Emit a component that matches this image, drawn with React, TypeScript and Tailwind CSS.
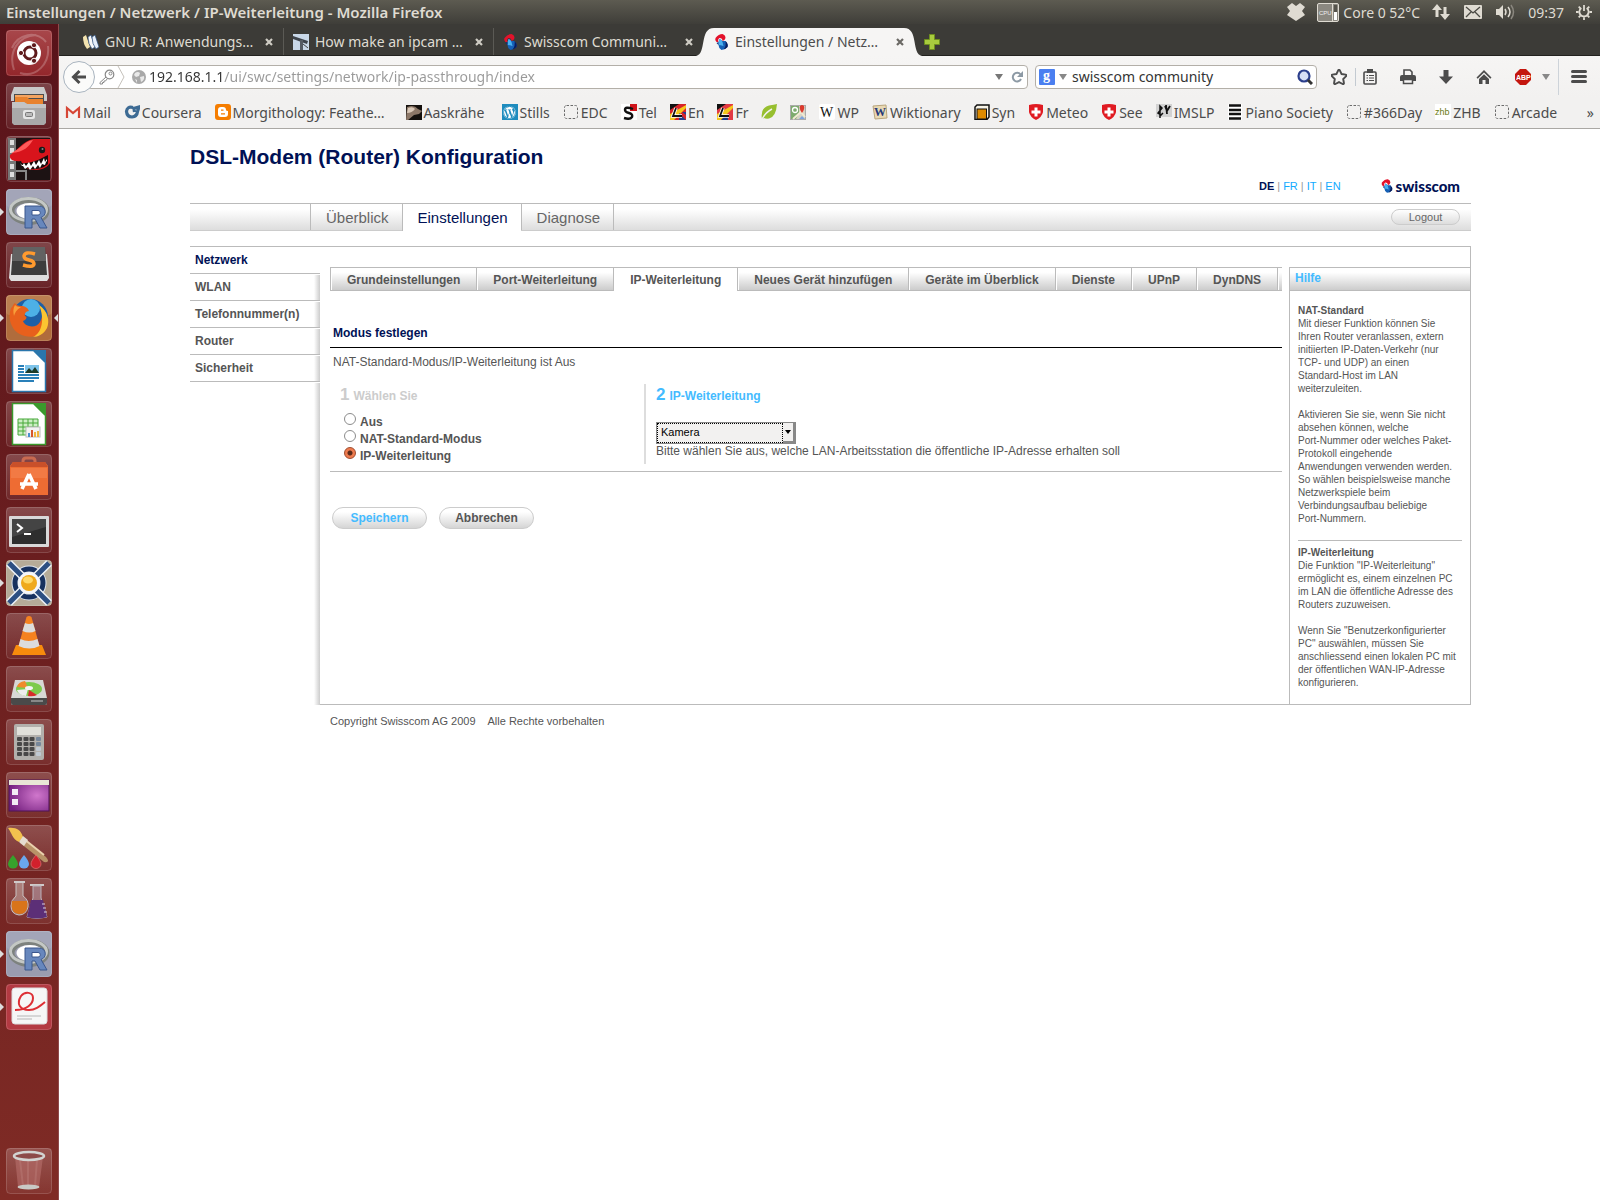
import { useState, type ReactNode } from 'react';
import clsx from 'clsx';
import { FaWordpress, FaStar } from 'react-icons/fa';

/* ---------- launcher drawings, all on a 46x46 tile ---------- */

function UbuntuIcon() {
    return (
        <>
            <path d="M8 40C2 22 12 6 30 5M14 43C30 48 44 34 42 16M6 18C12 4 30 0 40 12" fill="none" stroke="#fff" strokeOpacity=".22" strokeWidth="2" />
            <circle cx="23" cy="23" r="12" fill="#fff" />
            <circle cx="24" cy="23" r="6" fill="none" stroke="#5e1a1c" strokeWidth="3" />
            <g stroke="#fff" strokeWidth="1" fill="#5e1a1c">
                <circle cx="15" cy="23" r="2.6" />
                <circle cx="28" cy="15.2" r="2.6" />
                <circle cx="28" cy="30.8" r="2.6" />
            </g>
        </>
    );
}

function FilesIcon() {
    return (
        <>
            <path d="M8 4h30l3 8v6H5v-6z" fill="#c9c9c9" />
            <rect x="8" y="11" width="30" height="10" fill="#4c4c4c" />
            <path d="M9 12h28v3H9z" fill="#f4a460" />
            <path d="M9 14h12l2 2h14v5H9z" fill="#e8822e" />
            <path d="M6 19h12l3 2h19v19l-2 2H8l-2-2z" fill="#a9a9a9" />
            <path d="M6 19h12l3 2h19v4H6z" fill="#c4c4c4" />
            <rect x="17" y="27" width="12" height="9" rx="2" fill="#e6e6e6" />
            <rect x="19.5" y="29.5" width="7" height="4" rx="1" fill="#bbb" stroke="#777" />
        </>
    );
}

function SharkIcon() {
    return (
        <>
            <rect x="2" y="2" width="42" height="42" fill="#1c1213" />
            <rect x="2" y="2" width="8" height="42" fill="#777" />
            <path d="M4 4h4v5H4zM4 12h4v5H4zM4 20h4v5H4zM4 28h4v5H4zM4 36h4v5H4z" fill="#ddd" />
            <path d="M10 35h10v9" fill="none" stroke="#888" strokeWidth="2" />
            <path d="M4 19C12 14 16 6 27 3h17v24c-4 6-10 7-15 7-8 0-12-4-14-9C7 26 3 23 4 19z" fill="#d8141c" />
            <path d="M5 17C14 14 18 5 27 4c-4 6-8 12-22 13z" fill="#ff5a5a" />
            <path d="M13 27c10 1 18-2 29-8v9c-6 6-20 8-29-1z" fill="#190a0a" />
            <path d="M14 27l2 3 2-3 2 3 3-4 2 4 3-5 2 4 3-5 2 4 3-6 1 4 2-3v2l-1 1-1 3-3-1-2 4-2-3-3 4-2-3-3 4-2-3-3 2-2-3z" fill="#fff" />
            <circle cx="36" cy="14" r="3.2" fill="#1a1a1a" />
            <circle cx="36.5" cy="13" r="1" fill="#888" />
        </>
    );
}

function RIcon() {
    return (
        <>
            <rect x="0" y="0" width="46" height="46" rx="4" fill="#9a9caf" />
            <rect x="0" y="0" width="46" height="18" rx="4" fill="#a3a5b8" />
            <ellipse cx="23" cy="22" rx="17.5" ry="11" fill="none" stroke="#7d827e" strokeWidth="6" />
            <ellipse cx="22.5" cy="20.5" rx="18" ry="11" fill="none" stroke="#c4c8c5" strokeWidth="3" />
            <ellipse cx="24" cy="22" rx="13.5" ry="8" fill="#fff" />
            <path fillRule="evenodd" d="M19 17h14c8 0 8 10 2 11.5L41 39h-7l-5-9h-3v9h-7zM26 21.5v4.5h6c3 0 3-4.500 0-4.500z" fill="#6787bd" stroke="#3b568c" />
        </>
    );
}

function SublimeIcon() {
    return (
        <>
            <path d="M5 12h36l2 24-2 3H5l-2-3z" fill="#dedede" />
            <path d="M7 5h32l2 28H5z" fill="#3d3d3d" />
            <path d="M7 5h32l1 14H6z" fill="#626262" />
            <path d="M29 12q-10-3-11 2 0 3 5 4 5 1 5 4-1 4-11 1" fill="none" stroke="#ff9a2e" strokeWidth="3.5" />
        </>
    );
}

function FirefoxIcon() {
    return (
        <>
            <rect x="0" y="0" width="46" height="46" rx="4" fill="#b06c3c" />
            <rect x="0" y="0" width="46" height="20" rx="4" fill="#bb7f50" />
            <circle cx="24" cy="22" r="18" fill="#1d5fa6" />
            <circle cx="25" cy="13" r="9" fill="#4db0e6" />
            <path d="M5 13c1 0 3-5 4-5 1 2 3 3 6 3 4 0 7 2 8 5-3 0-5 3-4 5 3 1 1 4-2 5 2 6 13 8 17 1 3-5 3-11-1-17 8 6 11 16 8 23C36 45 12 45 6 31 3 25 3 19 5 13z" fill="#e8601c" />
            <path d="M33 10c9 6 11 16 8 23-3 6-9 9-14 9 9-4 12-18 6-32z" fill="#fbc531" />
            <path d="M9 10c2 2 4 2 6 2-5 3-6 6-7 9-1-4-1-8 1-11z" fill="#f89e3a" />
        </>
    );
}

function DocBase({ stroke, children }: { stroke: string; children: ReactNode }) {
    return (
        <>
            <path d="M6.5 2.5h21l12 12v29h-33z" fill="#fff" stroke={stroke} strokeWidth="1.5" />
            <path d="M27 2h13v13z" fill={stroke} />
            {children}
        </>
    );
}

function WriterIcon() {
    return (
        <DocBase stroke="#2a76ac">
            <path d="M12 18h6M12 21h6M12 24h6M12 27h21M12 30h21M12 33h16" stroke="#2a80b9" strokeWidth="1.8" />
            <rect x="19" y="17" width="14" height="8" fill="#7ec4ea" />
            <path d="M19 25l4-5 3 3 3-4 4 6z" fill="#1d3b2a" />
        </DocBase>
    );
}

function CalcIcon() {
    return (
        <DocBase stroke="#3a9a2c">
            <path d="M12 18h20v16H12zM12 22h20M12 26h20M12 30h20M17 18v16M22 18v16M27 18v16" fill="#cdeec4" stroke="#46a838" />
            <rect x="20" y="26" width="14" height="10" fill="#f3f3f3" stroke="#bbb" />
            <path d="M22 36v-4h2v4z" fill="#4a8fd0" />
            <path d="M25 36v-7h2v7z" fill="#d6572c" />
            <path d="M28 36v-5h2v5zM31 36v-6h2v6z" fill="#f0b43c" />
        </DocBase>
    );
}

function SoftwareIcon() {
    return (
        <>
            <path d="M17 12V7q0-3 3-3h6q3 0 3 3v5" fill="none" stroke="#c96a50" strokeWidth="3" />
            <path d="M4 12l3-4h32l3 4v29H4z" fill="#ee6c33" />
            <path d="M4 13l3-5h32l3 5z" fill="#c9502a" />
            <path d="M5 14h36v10H5z" fill="#f27a44" />
            <path d="M23 20l-7 15M23 20l7 15M14 30h18" stroke="#fff" strokeWidth="3.6" fill="none" />
        </>
    );
}

function TerminalIcon() {
    return (
        <>
            <rect x="3" y="9" width="40" height="31" rx="1" fill="#d9d9d9" />
            <rect x="6" y="12" width="34" height="25" fill="#2e2e2e" />
            <path d="M6 12h34v8L6 30z" fill="#444" />
            <path d="M11 17l5 4-5 4M18 27h7" fill="none" stroke="#fff" strokeWidth="2" />
        </>
    );
}

function BoincIcon() {
    return (
        <>
            <rect x="0" y="0" width="46" height="46" rx="4" fill="#b5ab98" />
            <circle cx="23" cy="23" r="14" fill="none" stroke="#dfe6ef" strokeWidth="7" />
            <circle cx="23" cy="23" r="14" fill="none" stroke="#17315f" strokeWidth="5" />
            <path d="M3 3l40 40M43 3L3 43" stroke="#eef2f7" strokeWidth="8" />
            <path d="M3 3l40 40M43 3L3 43" stroke="#2d4f82" strokeWidth="5" />
            <circle cx="23" cy="23" r="11" fill="#f4f6fa" />
            <circle cx="23" cy="23" r="8" fill="#efa91c" />
            <ellipse cx="22" cy="20" rx="5" ry="3.5" fill="#ffd968" />
        </>
    );
}

function VlcIcon() {
    return (
        <>
            <path d="M10 32h26l4 10H6z" fill="#f78b0c" />
            <path d="M20.5 4q2.5-2 5 0l8 29q-10 5-21 0z" fill="#f58220" />
            <path d="M19 10q4 2 8 0l2.5 8q-6 3-13 0zM14.5 26q8 4 17 0l2 7q-10 5-21 0z" fill="#dcdcdc" />
        </>
    );
}

function DiskIcon() {
    return (
        <>
            <path d="M9 14h28l4 18v5q0 2-2 2H7q-2 0-2-2v-5z" fill="#d8d8d6" />
            <path d="M5 32h36v5q0 2-2 2H7q-2 0-2-2z" fill="#4a4a4a" />
            <ellipse cx="23" cy="23" rx="13" ry="7" fill="#7ccb4c" />
            <path d="M22 22l-11-1q1-5 8-6z" fill="#f08a2c" />
            <path d="M23 24l8 5q-4 2-9 1z" fill="#d62c2c" />
            <path d="M22 23l-2 7q-8-1-9-6z" fill="#eee" />
            <ellipse cx="23" cy="22" rx="4" ry="2" fill="#f5f5f5" />
            <path d="M25 34h12v2H25z" fill="#888" />
        </>
    );
}

function CalculatorIcon() {
    const keys = [17, 22, 27, 32];
    return (
        <>
            <rect x="8" y="5" width="30" height="36" rx="2" fill="#b2b0ac" />
            <rect x="11" y="8" width="24" height="8" fill="#e0e0da" />
            {keys.map((y) => (
                <g key={y} fill="#484848">
                    <rect x="11" y={y + 1} width="5" height="4" rx="1" />
                    <rect x="17.5" y={y + 1} width="5" height="4" rx="1" />
                    <rect x="23.5" y={y + 1} width="5" height="4" rx="1" />
                    <rect x="30" y={y + 1} width="5" height="4" rx="1" fill={y > 25 ? '#bfc9d2' : '#76879a'} />
                </g>
            ))}
        </>
    );
}

function WorkspaceIcon() {
    return (
        <>
            <radialGradient id="wallpaper" cx=".7" cy=".5" r=".75">
                <stop offset="0" stopColor="#d077cc" />
                <stop offset="1" stopColor="#74207f" />
            </radialGradient>
            <rect x="3" y="8" width="40" height="31" fill="url(#wallpaper)" stroke="#4d1256" />
            <rect x="3" y="8" width="40" height="5" fill="#e9e6d6" />
            <path d="M6 17h6v6H6zM6 27h6v6H6z" fill="#f3ecf4" />
        </>
    );
}

function BrushIcon() {
    return (
        <>
            <path d="M16 13l24 19q5 6-2 5L14 18z" fill="#b89368" />
            <path d="M18 14l20 16" stroke="#ead2ae" strokeWidth="2" />
            <path d="M2 3c8-1 13 2 15 9l-4 5C6 14 6 8 2 3z" fill="#f2c14e" />
            <path d="M13 17l4-6 5 4-4 6z" fill="#e5ddd0" />
            <path d="M7 30q5 6 5 9a5 4.500 0 0 1-10 0q0-3 5-9z" fill="#37a22c" />
            <path d="M18 30q5 6 5 9a5 4.500 0 0 1-10 0q0-3 5-9z" fill="#6aa7ee" />
            <path d="M30 30q5 6 5 9a5 4.500 0 0 1-10 0q0-3 5-9z" fill="#d2202c" stroke="#e98080" strokeWidth=".6" />
        </>
    );
}

function FlasksIcon() {
    return (
        <>
            <path d="M10 4h7v14q6 4 5 11-2 8-9 8-8-1-8-9 0-6 5-10z" fill="#c9b3ae" fillOpacity=".5" stroke="#c8c2c2" />
            <path d="M6 23h15q2 13-8 13-9-1-7-13z" fill="#d9741a" />
            <path d="M8 4h11M24 7h14" stroke="#cfcaca" strokeWidth="2" />
            <path d="M27 8h8v12l6 19q-10 3-20 0l6-19z" fill="#b9a6b4" fillOpacity=".5" stroke="#bbb2ba" />
            <path d="M25 22h12l4 17q-10 3-20 0z" fill="#5c2f77" />
            <path d="M36 26h3M37 30h3M38 34h3" stroke="#d9d0dd" />
        </>
    );
}

function EvinceIcon() {
    return (
        <>
            <rect x="0" y="0" width="46" height="46" rx="4" fill="#b33a42" />
            <rect x="6" y="4" width="35" height="36" rx="3" fill="#f6f6f6" stroke="#ddd" />
            <path d="M9 26c12 0 18-6 18-12 0-6-8-7-12-2-5 8-1 14 8 14 6 0 10-3 16-8" fill="none" stroke="#dd2f35" strokeWidth="2" />
            <path d="M11 32h24M11 35h15" stroke="#ccc" strokeWidth="1.5" />
        </>
    );
}

function TrashIcon() {
    return (
        <>
            <path d="M9 9h28l-4 30q-10 4-21 0z" fill="#b8706c" fillOpacity=".6" />
            <path d="M14 12l3 26M22 12v28M31 12l-2 26" stroke="#d9a5a2" strokeOpacity=".2" strokeWidth="2" />
            <ellipse cx="23" cy="8" rx="15" ry="4" fill="#8c4b49" stroke="#d2d4d2" strokeWidth="2.5" />
            <ellipse cx="22.5" cy="39" rx="11" ry="2.5" fill="#c9c9c5" />
        </>
    );
}

const launcherItems: { label: string; icon: ReactNode; running?: boolean; focused?: boolean }[] = [
    { label: 'Dash', icon: <UbuntuIcon /> },
    { label: 'Dateien', icon: <FilesIcon /> },
    { label: 'Lightworks', icon: <SharkIcon /> },
    { label: 'R', icon: <RIcon />, running: true },
    { label: 'Sublime Text', icon: <SublimeIcon /> },
    { label: 'Firefox', icon: <FirefoxIcon />, running: true, focused: true },
    { label: 'Writer', icon: <WriterIcon /> },
    { label: 'Calc', icon: <CalcIcon /> },
    { label: 'Software-Center', icon: <SoftwareIcon /> },
    { label: 'Terminal', icon: <TerminalIcon /> },
    { label: 'BOINC', icon: <BoincIcon />, running: true },
    { label: 'VLC', icon: <VlcIcon /> },
    { label: 'Laufwerke', icon: <DiskIcon /> },
    { label: 'Taschenrechner', icon: <CalculatorIcon /> },
    { label: 'Arbeitsfläche', icon: <WorkspaceIcon /> },
    { label: 'Farben', icon: <BrushIcon /> },
    { label: 'Labor', icon: <FlasksIcon /> },
    { label: 'R-Konsole', icon: <RIcon />, running: true },
    { label: 'Dokumentenbetrachter', icon: <EvinceIcon />, running: true },
];

function LauncherButton({
    label,
    icon,
    running,
    focused,
}: {
    label: string;
    icon: ReactNode;
    running?: boolean;
    focused?: boolean;
}) {
    return (
        <button aria-label={label} className="relative flex h-[46px] w-full justify-center pr-px">
            <span
                className={clsx(
                    'block size-[46px] overflow-hidden rounded bg-linear-to-b',
                    label === 'Dash' ? 'from-[#a8474b] to-[#93262b]' : 'from-white/20 to-white/5',
                )}
            >
                <svg viewBox="0 0 46 46" className="size-[46px]">
                    {icon}
                    <rect x=".5" y=".5" width="45" height="45" rx="4" fill="none" stroke="#fff" strokeOpacity=".15" />
                </svg>
            </span>
            {running && (
                <svg viewBox="0 0 4 8" className="absolute top-[19px] left-0 h-2 w-1">
                    <path d="M0 0l4 4-4 4z" fill="#ddd" />
                </svg>
            )}
            {focused && (
                <svg viewBox="0 0 4 8" className="absolute top-[19px] right-0 h-2 w-1">
                    <path d="M4 0L0 4l4 4z" fill="#ddd" />
                </svg>
            )}
        </button>
    );
}

function Launcher() {
    return (
        <nav
            aria-label="Starter"
            className="flex w-[59px] shrink-0 flex-col justify-between border-r border-[#8f4a4b] bg-linear-to-b from-[#59131a] to-[#7f2b25] py-[6px]"
        >
            <div className="flex flex-col gap-[7px]">
                {launcherItems.map((item) => (
                    <LauncherButton key={item.label} {...item} />
                ))}
            </div>
            <LauncherButton label="Papierkorb" icon={<TrashIcon />} />
        </nav>
    );
}

/* ---------- system panel ---------- */

function TopPanel() {
    return (
        <header className="flex h-6 items-center justify-between bg-linear-to-b from-[#5d5b51] to-[#3f3e39] pr-2 pl-[6px] text-[14px] text-[#dfdbd2]">
            <span className="text-[15px] font-semibold">Einstellungen / Netzwerk / IP-Weiterleitung - Mozilla Firefox</span>
            <div className="flex items-center">
                <svg viewBox="0 0 18 18" className="size-[18px]" fill="#dfdbd2">
                    <path d="M5 0l4 3 4-3 5 4-3 4 3 4-3 2-6 4-6-4-3-2 3-4-3-4z" />
                </svg>
                <svg viewBox="0 0 22 19" className="ml-3 h-[19px] w-[22px]">
                    <rect x=".5" y=".5" width="21" height="18" rx="1.5" fill="#8b8880" stroke="#dfdbd2" />
                    <path d="M15.5 0v19" stroke="#dfdbd2" />
                    <rect x="17" y="2" width="3" height="7" fill="#55534b" />
                    <rect x="17" y="9" width="3" height="8" fill="#fff" />
                    <text x="2" y="12" fontSize="6" fill="#eee" fontFamily="Liberation Sans, sans-serif">CPU</text>
                </svg>
                <span className="ml-1">Core 0 52°C</span>
                <svg viewBox="0 0 18 18" className="ml-3 size-[18px]" fill="#dfdbd2">
                    <path d="M5 1l5 6H6.5v7h-3V7H0zM13 17l-5-6h3.5V4h3v7H18z" />
                </svg>
                <svg viewBox="0 0 18 14" className="ml-[14px] h-[14px] w-[18px]">
                    <rect width="18" height="14" rx="1" fill="#dfdbd2" />
                    <path d="M2 2l7 6 7-6M2 12l5-5M16 12l-5-5" fill="none" stroke="#4a4943" strokeWidth="1.3" />
                </svg>
                <svg viewBox="0 0 20 16" className="ml-[14px] h-4 w-5">
                    <path d="M0 5h3l4-4v14l-4-4H0z" fill="#dfdbd2" />
                    <path d="M9 5q2 3 0 6M12 3q4 5 0 10" fill="none" stroke="#dfdbd2" strokeWidth="1.5" />
                    <path d="M15 1q5 7 0 14" fill="none" stroke="#8a877f" strokeWidth="1.5" />
                </svg>
                <span className="ml-3">09:37</span>
                <svg viewBox="0 0 18 18" className="ml-3 size-4" fill="none" stroke="#dfdbd2">
                    <path d="M6 4.5a5.200 5.200 0 1 0 6 0" strokeWidth="2" />
                    <path d="M9 1v7" strokeWidth="2" />
                    <path d="M3 3l2 2M15 3l-2 2M0 9h3M15 9h3M3 15l2-2M15 15l-2-2M9 15v3" strokeWidth="2" />
                </svg>
            </div>
        </header>
    );
}

/* ---------- browser chrome ---------- */

function SwisscomMark({ className }: { className: string }) {
    return (
        <svg viewBox="0 0 14 16" className={className}>
            <path d="M1 4Q4 0 8 0q3 1 3 4l-1 2-2 1q0-3-3-3-2 1-1 4L2 8Q0 6 1 4z" fill="#e3122b" />
            <path d="M5 5l3 2 3 0q3 3 2 6-3 3-6 3-3-2-3-5 0-3 1-6z" fill="#1560b5" />
            <path d="M5 5q2 0 3 3l1 4q-3-1-5-1 0-4 1-6z" fill="#4ab0ee" />
            <path d="M11 7q3 3 2 6-2 2-4 2.500Q12 12 11 7z" fill="#0a1c5c" />
            <path d="M2 9l2-1v3z" fill="#0c2e7e" />
        </svg>
    );
}

function BooksIcon() {
    return (
        <svg viewBox="0 0 16 16" className="size-4 shrink-0">
            <path d="M0 3l3-2 4 12-3 2Q0 10 0 3z" fill="#f3e3b0" />
            <path d="M5 3l3-2 4 12-3 2Q5 10 5 3z" fill="#f8f8f8" stroke="#2b4f7c" strokeWidth=".7" />
            <path d="M9 3l3-2 4 12-3 2Q9 10 9 3z" fill="#e5eefa" stroke="#2b4f7c" strokeWidth=".7" />
        </svg>
    );
}

function CameraIcon() {
    return (
        <svg viewBox="0 0 16 16" className="size-4 shrink-0">
            <rect width="16" height="16" fill="#c9d8e8" />
            <path d="M0 2l15 5-1 3L0 5z" fill="#3e444c" />
            <path d="M7 6h3v10H7z" fill="#565c64" />
            <path d="M10 10l5 4" stroke="#444" />
        </svg>
    );
}

function CloseIcon({ active }: { active?: boolean }) {
    return (
        <svg viewBox="0 0 8 8" className="size-2">
            <path d="M1 1l6 6M7 1L1 7" stroke={active ? '#6b6965' : '#cfccc4'} strokeWidth="2.2" />
        </svg>
    );
}

function BackgroundTab({ title, icon, divider }: { title: string; icon: ReactNode; divider?: boolean }) {
    return (
        <div
            className={clsx(
                'flex h-[27px] w-[210px] items-center gap-[6px] border-r pr-[10px] pl-[9px] text-[#dfdbd2]',
                divider ? 'border-[#5b5a55]' : 'border-transparent',
            )}
        >
            {icon}
            <button className="flex-1 text-left whitespace-nowrap">{title}</button>
            <button aria-label={`${title} schließen`}>
                <CloseIcon />
            </button>
        </div>
    );
}

function TabStrip() {
    return (
        <div className="flex h-8 items-end border-b border-[#23221f] bg-[#3c3b37] pl-[15px] text-[14px]">
            <BackgroundTab title="GNU R: Anwendungs…" icon={<BooksIcon />} divider />
            <BackgroundTab title="How make an ipcam …" icon={<CameraIcon />} divider />
            <BackgroundTab title="Swisscom Communi…" icon={<SwisscomMark className="h-4 w-[15px] shrink-0" />} />
            <div className="-mb-px -ml-2 flex h-7 items-stretch">
                <svg viewBox="0 0 18 28" className="h-7 w-[18px]">
                    <path d="M0 28C11 26 3 0 18 0v28z" fill="#f6f5f4" />
                </svg>
                <div className="flex w-[190px] items-center gap-[6px] bg-[#f6f5f4] pb-px text-[#4c4c4c]">
                    <SwisscomMark className="h-4 w-[15px] shrink-0" />
                    <button className="flex-1 text-left whitespace-nowrap">Einstellungen / Netz…</button>
                    <button aria-label="Tab schließen">
                        <CloseIcon active />
                    </button>
                </div>
                <svg viewBox="0 0 18 28" className="h-7 w-[18px]">
                    <path d="M18 28C7 26 15 0 0 0v28z" fill="#f6f5f4" />
                </svg>
            </div>
            <button aria-label="Neuer Tab" className="mb-[5px] ml-[2px]">
                <svg viewBox="0 0 16 16" className="size-4">
                    <path d="M5.5.5h5v5h5v5h-5v5h-5v-5h-5v-5h5z" fill="#a8cc3e" stroke="#6f8f1e" />
                </svg>
            </button>
        </div>
    );
}

function NavBar() {
    const [url, setUrl] = useState('192.168.1.1/ui/swc/settings/network/ip-passthrough/index');
    const [search, setSearch] = useState('swisscom community');

    return (
        <div className="flex h-[42px] items-center bg-linear-to-b from-[#f6f5f4] to-[#f2f1f0] pr-[13px] pb-px pl-1 text-[14px] text-[#4c4c4c]">
            <button
                aria-label="Zurück"
                className="z-10 flex size-8 shrink-0 items-center justify-center rounded-full border border-[#a9b4bf] bg-[#fbfbfa]"
            >
                <svg viewBox="0 0 16 16" className="size-4">
                    <path d="M15 8H3M8.5 2L2.5 8l6 6" fill="none" stroke="#4c4c4c" strokeWidth="3" />
                </svg>
            </button>
            <div className="-ml-2 flex h-6 flex-1 items-center rounded-sm border border-[#b3afa8] bg-white pr-1 pl-[11px]">
                <svg viewBox="0 0 16 16" className="size-4">
                    <circle cx="10.5" cy="5.5" r="4.3" fill="none" stroke="#888" strokeWidth="1.2" />
                    <circle cx="11.5" cy="4.5" r="1.5" fill="none" stroke="#888" />
                    <path d="M7 8l-6 5.500V15h2.500v-1.500H5V12h1.500L8.500 9.500" fill="none" stroke="#888" />
                </svg>
                <svg viewBox="0 0 8 22" className="ml-[2px] h-[22px] w-2">
                    <path d="M1 0l6 11-6 11" fill="none" stroke="#c5c1bb" />
                </svg>
                <svg viewBox="0 0 14 14" className="ml-[7px] size-[14px]">
                    <circle cx="7" cy="7" r="7" fill="#a9a9a9" />
                    <path d="M3 3q3-2 5 0l-1 3-3 1-2-2zM8 7l4-1q1 4-3 6zM3 9l2 1v3z" fill="#e9e9e9" />
                </svg>
                {/* the host part is darker than the path behind it */}
                <input
                    aria-label="Adresse"
                    value={url}
                    onChange={(e) => setUrl(e.target.value)}
                    className="ml-[3px] min-w-0 flex-1 bg-linear-to-r from-[#333] from-[75px] to-[#999] to-[75px] bg-clip-text text-transparent caret-black outline-none"
                />
                <svg viewBox="0 0 8 6" className="h-[6px] w-2">
                    <path d="M0 0h8L4 6z" fill="#777" />
                </svg>
                <button aria-label="Neu laden" className="ml-2">
                    <svg viewBox="0 0 12 12" className="size-3">
                        <path d="M9.5 3.500A4.300 4.300 0 1 0 10 8" fill="none" stroke="#8d9aa5" strokeWidth="2" />
                        <path d="M12 0v6H6z" fill="#8d9aa5" />
                    </svg>
                </button>
            </div>
            <div className="ml-[7px] flex h-6 w-[282px] items-center rounded-sm border border-[#b3afa8] bg-white px-[3px]">
                <svg viewBox="0 0 16 16" className="size-4">
                    <rect width="16" height="16" rx="1" fill="#4a7ff0" />
                    <text x="4" y="11" fontSize="14" fontWeight="700" fill="#fff" fontFamily="Liberation Serif, serif">g</text>
                </svg>
                <svg viewBox="0 0 8 6" className="ml-1 h-[6px] w-2">
                    <path d="M0 0h8L4 6z" fill="#888" />
                </svg>
                <input
                    aria-label="Suche"
                    value={search}
                    onChange={(e) => setSearch(e.target.value)}
                    className="ml-[5px] min-w-0 flex-1 text-[#333] outline-none"
                />
                <button aria-label="Suchen">
                    <svg viewBox="0 0 16 16" className="size-4">
                        <circle cx="7" cy="7" r="5.5" fill="#d7dff5" stroke="#2c3f8c" strokeWidth="2.2" />
                        <path d="M11 11l4 4" stroke="#333" strokeWidth="3" />
                    </svg>
                </button>
            </div>
            <div className="flex items-center text-[#4c4c4c]">
                <button aria-label="Lesezeichen" className="ml-[14px]">
                    <FaStar size={16} fill="#f6f5f4" stroke="#4c4c4c" strokeWidth={70} />
                </button>
                <span className="ml-2 h-[18px] w-px bg-[#c3cad1]" />
                <svg viewBox="0 0 16 16" className="ml-[6px] size-4">
                    <rect x="2" y="3" width="12" height="12" rx="1" fill="none" stroke="#4c4c4c" strokeWidth="1.6" />
                    <rect x="5" y="0" width="6" height="4" fill="#4c4c4c" />
                    <path d="M4.5 6.500h1.500M7 6.500h5M4.500 9h1.500M7 9h5M4.500 11.500h1.500M7 11.500h5" stroke="#4c4c4c" strokeWidth="1.2" />
                </svg>
                <svg viewBox="0 0 16 16" className="ml-[22px] size-4">
                    <path d="M4 6V1h6l2 2v3" fill="none" stroke="#4c4c4c" strokeWidth="1.6" />
                    <path d="M0 8q0-2 2-2h12q2 0 2 2v4h-3v-2H3v2H0z" fill="#4c4c4c" />
                    <path d="M3.5 10.500h9v4h-9z" fill="#f6f5f4" stroke="#4c4c4c" strokeWidth="1.5" />
                </svg>
                <svg viewBox="0 0 16 16" className="ml-[22px] size-4" fill="#4c4c4c">
                    <path d="M5.5 1h5v6.500H15L8 15 1 7.500h4.500z" />
                </svg>
                <svg viewBox="0 0 16 16" className="ml-[22px] size-4" fill="#4c4c4c">
                    <path d="M8 1l7.500 7.500-1.200 1.200L8 3.500 1.700 9.700.5 8.500z" />
                    <path d="M3 10l5-4.800 5 4.800v5H9.500v-4h-3v4H3z" />
                </svg>
                <svg viewBox="0 0 16 16" className="ml-[23px] size-4">
                    <path d="M5 0h6l5 5v6l-5 5H5l-5-5V5z" fill="#c4160e" />
                    <text x="1" y="10.5" fontSize="7" fontWeight="700" fill="#fff" fontFamily="Liberation Sans, sans-serif">ABP</text>
                </svg>
                <svg viewBox="0 0 8 6" className="ml-[11px] h-[6px] w-2">
                    <path d="M0 0h8L4 6z" fill="#888" />
                </svg>
                <span className="ml-2 h-9 w-px bg-[#cdd3d9]" />
                <button aria-label="Menü" className="ml-3 flex w-4 flex-col gap-[2px]">
                    <span className="h-[3px] rounded-sm bg-[#4c4c4c]" />
                    <span className="h-[3px] rounded-sm bg-[#4c4c4c]" />
                    <span className="h-[3px] rounded-sm bg-[#4c4c4c]" />
                </button>
            </div>
        </div>
    );
}

const dashedPage = <rect x="1.5" y="1.5" width="13" height="13" rx="2" fill="none" stroke="#6b6b6b" strokeDasharray="2.5 1.5" />;

const swissShield = (
    <>
        <path d="M1 1q7-2 14 0v7q-1 5-7 8-6-3-7-8z" fill="#e01b22" />
        <path d="M6.5 3.500h3v3h3v3h-3v3h-3v-3h-3v-3h3z" fill="#fff" />
    </>
);

const bookmarks: { label: string; icon: ReactNode; width?: string }[] = [
    {
        label: 'Mail',
        icon: (
            <>
                <path d="M1 3h14v11H1z" fill="#f3f3f3" />
                <path d="M2 14V4l6 5 6-5v10" fill="none" stroke="#d64636" strokeWidth="2.2" />
            </>
        ),
    },
    {
        label: 'Coursera',
        icon: <path d="M9 3.500Q3 2 2.500 7.500 3 13 8 13q5-.5 5.500-5.500L15 3l-5 1.500.5 3.500" fill="none" stroke="#3d6b94" strokeWidth="3.2" />,
    },
    {
        label: 'Morgithology: Feathe…',
        width: 'min-w-[178px]',
        icon: (
            <>
                <rect width="16" height="16" rx="3" fill="#f57d00" />
                <path fillRule="evenodd" d="M3 6q0-3 3-3h2q3 0 3 3 0 1 2 1v3q0 3-3 3H6q-3 0-3-3zM6 5.500v1.300h2.500V5.500zM6 9.200v1.300h4V9.200z" fill="#fff" />
            </>
        ),
    },
    {
        label: 'Aaskrähe',
        width: 'min-w-[83px]',
        icon: (
            <>
                <rect y="1" width="16" height="15" fill="#15110e" />
                <path d="M1 3q7-3 11 2l4 2-3 3-5 1-6 5H0z" fill="#8d7868" />
                <path d="M2 4q5-2 7 1-3 4-8 4z" fill="#d9c8b8" />
            </>
        ),
    },
    { label: 'Stills', icon: 'wordpress' },
    { label: 'EDC', icon: dashedPage },
    {
        label: 'Tel',
        icon: (
            <>
                <rect width="16" height="16" fill="#fff" />
                <rect x="9" width="7" height="7" fill="#d0141b" />
                <path d="M12 5Q4 2 4 6q0 2 4 3 4 1 3 4-2 3-8 1" fill="none" stroke="#111" strokeWidth="2.4" />
            </>
        ),
    },
    {
        label: 'En',
        icon: (
            <>
                <rect width="16" height="16" fill="#d8232a" />
                <path d="M0 0h9L0 6z" fill="#111" />
                <path d="M0 16V10L16 1v3L4 16z" fill="#f5c71a" />
                <path d="M9 9l7 7h-7zM12 8h4v3z" fill="#22408f" />
                <path d="M6 4L3 12h9" fill="none" stroke="#fff" strokeWidth="3.5" />
                <path d="M6 4L3 12h9" fill="none" stroke="#111" strokeWidth="1.8" />
            </>
        ),
    },
    {
        label: 'Fr',
        icon: (
            <>
                <rect width="16" height="16" fill="#e23a44" />
                <path d="M0 0h9L0 6z" fill="#111" />
                <path d="M0 16V10L16 1v3L4 16z" fill="#f5c71a" />
                <path d="M8 12h3v4H4z" fill="#22408f" />
                <path d="M6 4L3 12h9" fill="none" stroke="#fff" strokeWidth="3.5" />
                <path d="M6 4L3 12h9" fill="none" stroke="#111" strokeWidth="1.8" />
            </>
        ),
    },
    {
        label: '',
        icon: (
            <>
                <path d="M1 15Q-1 4 8 1.500q5-1 8-1.500-1 13-8 14.500-3 .5-5-.5z" fill="#97bf2f" />
                <path d="M1 15Q5 8 11 5" fill="none" stroke="#f2f1f0" strokeWidth="1.5" />
            </>
        ),
    },
    {
        label: '',
        icon: (
            <>
                <rect x=".5" y="1.5" width="15" height="14" fill="#d8d4c6" stroke="#aaa" />
                <path d="M1 2h8v7l-3 6H1z" fill="#7dab6e" />
                <circle cx="5" cy="6" r="2.5" fill="none" stroke="#fff" strokeWidth="1.3" />
                <path d="M3 15L11 8l4 5" fill="none" stroke="#f0ead2" strokeWidth="2" />
                <path d="M9 15l3-3 3 3z" fill="#7da3dd" />
                <path d="M12 9Q9 5 10 2q2-2 4 0 1 3-2 7z" fill="#db3a2d" />
            </>
        ),
    },
    {
        label: 'WP',
        icon: (
            <>
                <rect width="16" height="16" rx="2" fill="#fff" />
                <text x="1" y="13" fontSize="14" fill="#111" fontFamily="Liberation Serif, serif">W</text>
            </>
        ),
    },
    {
        label: 'Wiktionary',
        icon: (
            <>
                <path d="M1 2l13-1 1 13-12 1z" fill="#e9d9b4" stroke="#b9a57c" />
                <text x="2" y="12" fontSize="12" fontWeight="700" fill="#263a78" fontFamily="Liberation Serif, serif">W</text>
            </>
        ),
    },
    {
        label: 'Syn',
        icon: (
            <>
                <path d="M3 1h12v12l-2 2.500H1V3z" fill="#f7f3e6" stroke="#111" strokeWidth="1.5" />
                <rect x="3" y="5" width="9.5" height="10" fill="#dd8a00" stroke="#111" />
            </>
        ),
    },
    { label: 'Meteo', icon: swissShield },
    { label: 'See', icon: swissShield },
    {
        label: 'IMSLP',
        icon: (
            <>
                <rect width="16" height="13" fill="#d2d2d2" />
                <path d="M4 14V2l2 2-4 5 3 2 2-2" fill="none" stroke="#111" strokeWidth="1.5" />
                <path d="M9 2l2 5 3-5M10 1l1 9" fill="none" stroke="#111" strokeWidth="1.8" />
            </>
        ),
    },
    {
        label: 'Piano Society',
        icon: (
            <>
                <rect width="14" height="16" fill="#fff" />
                <path d="M1 1.500h12M1 6h12M1 10h12M1 14.500h12" stroke="#111" strokeWidth="2.4" />
            </>
        ),
    },
    { label: '#366Day', icon: dashedPage },
    {
        label: 'ZHB',
        icon: (
            <>
                <rect width="16" height="16" fill="#fff" />
                <text x="0" y="11" fontSize="9" fill="#6b7a10" fontFamily="Liberation Sans, sans-serif">zhb</text>
            </>
        ),
    },
    { label: 'Arcade', icon: dashedPage },
];

function BookmarksBar() {
    return (
        <div className="flex h-[31px] items-center justify-between border-b border-[#aaa8a4] bg-[#f2f1f0] pr-[6px] pb-[2px] pl-[6px] text-[14px] text-[#4c4c4c]">
            <div className="flex items-center gap-[13px]">
                {bookmarks.map(({ label, icon, width }, index) => (
                    <a
                        key={index}
                        href="#"
                        aria-label={label || 'Lesezeichen'}
                        className={clsx('flex items-center gap-[2px] whitespace-nowrap', width)}
                    >
                        {icon === 'wordpress' ? (
                            <span className="flex size-4 items-center justify-center bg-[#1e8cbe] text-white">
                                <FaWordpress size={13} />
                            </span>
                        ) : (
                            <svg viewBox="0 0 16 16" className="size-4 shrink-0">
                                {icon}
                            </svg>
                        )}
                        {label}
                    </a>
                ))}
            </div>
            <button>»</button>
        </div>
    );
}

/* ---------- router page ---------- */

const mainTabs = ['Überblick', 'Einstellungen', 'Diagnose'];
const sideItems = ['Netzwerk', 'WLAN', 'Telefonnummer(n)', 'Router', 'Sicherheit'];
const subTabs = [
    'Grundeinstellungen',
    'Port-Weiterleitung',
    'IP-Weiterleitung',
    'Neues Gerät hinzufügen',
    'Geräte im Überblick',
    'Dienste',
    'UPnP',
    'DynDNS',
];
const modes = ['Aus', 'NAT-Standard-Modus', 'IP-Weiterleitung'];

const natHelp = `Mit dieser Funktion können Sie
Ihren Router veranlassen, extern
initiierten IP-Daten-Verkehr (nur
TCP- und UDP) an einen
Standard-Host im LAN
weiterzuleiten.

Aktivieren Sie sie, wenn Sie nicht
absehen können, welche
Port-Nummer oder welches Paket-
Protokoll eingehende
Anwendungen verwenden werden.
So wählen beispielsweise manche
Netzwerkspiele beim
Verbindungsaufbau beliebige
Port-Nummern.`;

const ipHelp = `Die Funktion "IP-Weiterleitung"
ermöglicht es, einem einzelnen PC
im LAN die öffentliche Adresse des
Routers zuzuweisen.

Wenn Sie "Benutzerkonfigurierter
PC" auswählen, müssen Sie
anschliessend einen lokalen PC mit
der öffentlichen WAN-IP-Adresse
konfigurieren.`;

function PageHeader() {
    return (
        <>
            <h1 className="text-[21px] leading-6 font-bold text-[#001155]">DSL-Modem (Router) Konfiguration</h1>
            <div className="mt-[6px] flex h-7 items-center justify-end pr-[11px] pb-[6px]">
                <div className="flex gap-[3px] text-[11px] text-[#11aaff]">
                    <a href="#" className="font-bold text-[#001155]">DE</a>
                    <span className="text-[#999]">|</span>
                    <a href="#">FR</a>
                    <span className="text-[#999]">|</span>
                    <a href="#">IT</a>
                    <span className="text-[#999]">|</span>
                    <a href="#">EN</a>
                </div>
                <div className="ml-10 flex items-center gap-[3px]">
                    <SwisscomMark className="h-[14px] w-3" />
                    <span className="text-[15px] leading-4 font-black text-[#001155] [font-family:Lato,'Open_Sans',sans-serif]">swisscom</span>
                </div>
            </div>
            <nav className="flex h-7 items-stretch border-y border-t-[#bbb] border-b-[#ccc] bg-linear-to-b from-white from-20% to-[#ddd]">
                <div className="w-[120px]" />
                {mainTabs.map((tab) => (
                    <a
                        key={tab}
                        href="#"
                        className={clsx(
                            'flex items-center border-l border-[#bbb] pr-[13px] pl-[15px] text-[15px] leading-4',
                            tab === 'Einstellungen' ? '-mb-px bg-white text-[#001155]' : 'pt-px text-[#666]',
                        )}
                    >
                        {tab}
                    </a>
                ))}
                <div className="flex flex-1 items-center justify-end border-l border-[#bbb] pr-[11px]">
                    <button className="h-4 w-[69px] rounded-full border border-[#ccc] bg-linear-to-b from-white to-[#ddd] text-[11px] leading-3 text-[#666]">
                        Logout
                    </button>
                </div>
            </nav>
        </>
    );
}

function SideNav() {
    return (
        <nav className="flex w-[130px] shrink-0 flex-col text-[12px] leading-[26px] font-bold text-[#555]">
            {sideItems.map((item, index) => (
                <a
                    key={item}
                    href="#"
                    className={clsx('flex justify-between border-b border-[#bbb] pl-[5px]', index === 0 && 'text-[#001155]')}
                >
                    {item}
                    {index > 0 && <span className="mt-px w-[6px] bg-linear-to-r from-white to-[#ccc]" />}
                </a>
            ))}
            <span className="mt-px w-[6px] flex-1 self-end bg-linear-to-r from-white to-[#ccc]" />
        </nav>
    );
}

function SubTabs() {
    return (
        <nav className="flex h-6 items-stretch border-t border-l border-[#bbb] text-[12px] leading-6 font-bold text-[#555]">
            {subTabs.map((tab) => (
                <a
                    key={tab}
                    href="#"
                    className={clsx(
                        'h-[23px] border-r border-r-[#bbb] px-4 whitespace-nowrap',
                        tab === 'IP-Weiterleitung'
                            ? 'bg-white'
                            : 'border-b border-b-[#bbb] bg-linear-to-b from-white from-20% to-[#ccc] shadow-[inset_1px_0_white]',
                    )}
                >
                    {tab}
                </a>
            ))}
            <span className="flex-1 border-b border-[#bbb] bg-linear-to-b from-white from-20% to-[#ccc] shadow-[inset_1px_0_white]" />
        </nav>
    );
}

function ModeForm() {
    const [mode, setMode] = useState<string>('IP-Weiterleitung');

    return (
        <form className="text-[12px] text-[#555]" onSubmit={(e) => e.preventDefault()}>
            <h2 className="mt-8 border-b border-black pb-1 pl-[3px] leading-5 font-bold text-[#001155]">Modus festlegen</h2>
            <p className="mt-1 pl-[3px] leading-5">NAT-Standard-Modus/IP-Weiterleitung ist Aus</p>
            <div className="mt-3 flex border-b border-[#bbb] pb-[7px]">
                <div role="radiogroup" aria-labelledby="mode-title" className="w-[316px] border-r-2 border-[#ddd] pl-[10px] font-bold">
                    <h3 id="mode-title" className="flex h-[23px] items-baseline gap-1 pt-px leading-5 text-[#ccc]">
                        <span className="text-[17px]">1</span>
                        Wählen Sie
                    </h3>
                    <div className="mt-[6px] pl-1">
                        {modes.map((item) => (
                            <label key={item} className="flex h-[17px] items-start gap-1 leading-[19px]">
                                <input
                                    type="radio"
                                    name="mode"
                                    checked={mode === item}
                                    onChange={() => setMode(item)}
                                    className="size-3 appearance-none rounded-full border border-[#8c8c8c] bg-white checked:border-[#a04a2c] checked:bg-[radial-gradient(circle,#5a2a1a_2px,#ee7b4e_3px)]"
                                />
                                {item}
                            </label>
                        ))}
                    </div>
                </div>
                <div className="flex-1 pl-[10px]">
                    <h3 className="flex h-[23px] items-baseline gap-1 pt-px leading-5 font-bold text-[#44bbff]">
                        <span className="text-[17px]">2</span>
                        IP-Weiterleitung
                    </h3>
                    <div className="mt-[15px] flex h-[22px] w-[140px] border border-[#888] text-[11px] text-black">
                        <select
                            aria-label="LAN-Arbeitsstation"
                            className="flex-1 appearance-none border border-dotted border-black bg-[#f2f1f0] pb-[2px] pl-[3px] leading-3 outline-none"
                        >
                            <option>Kamera</option>
                        </select>
                        <span aria-hidden className="flex w-3 items-center justify-center border-r-2 border-b-2 border-[#888] bg-[#f2f1f0]">
                            <svg viewBox="0 0 6 4" className="h-1 w-[6px]">
                                <path d="M0 0h6L3 4z" />
                            </svg>
                        </span>
                    </div>
                    <p className="leading-[14px]">Bitte wählen Sie aus, welche LAN-Arbeitsstation die öffentliche IP-Adresse erhalten soll</p>
                </div>
            </div>
            <div className="mt-[35px] flex gap-3 pl-[2px] font-bold">
                <button
                    type="submit"
                    className="h-[22px] w-[95px] rounded-full border border-[#ccc] bg-linear-to-b from-white from-20% to-[#d5d5d5] text-[#44bbff]"
                >
                    Speichern
                </button>
                <button
                    type="button"
                    className="h-[22px] w-[95px] rounded-full border border-[#ccc] bg-linear-to-b from-white from-20% to-[#d5d5d5]"
                >
                    Abbrechen
                </button>
            </div>
        </form>
    );
}

function HelpPanel() {
    return (
        <aside className="mt-5 w-[181px] shrink-0 border-t border-l border-[#bbb] text-[10px] leading-[13px] text-[#555]">
            <h2 className="h-[23px] border-b border-[#bbb] bg-linear-to-b from-white from-20% to-[#ccc] pl-[5px] text-[12px] leading-5 font-bold text-[#44bbff]">
                Hilfe
            </h2>
            <div className="pt-[13px] pr-2 pb-[15px] pl-2 whitespace-pre">
                <h3 className="font-bold">NAT-Standard</h3>
                <p>{natHelp}</p>
                <h3 className="mt-[15px] border-t border-[#bbb] pt-[5px] font-bold">IP-Weiterleitung</h3>
                <p>{ipHelp}</p>
            </div>
        </aside>
    );
}

function RouterPage() {
    return (
        <main className="flex-1 bg-white pt-4 pr-[129px] pl-[131px] [font-family:'Liberation_Sans',Arial,sans-serif]">
            <PageHeader />
            <div className="mt-[15px] flex border-t border-r border-[#bbb]">
                <SideNav />
                <div className="flex flex-1 gap-[7px] border-b border-[#bbb] pl-[10px]">
                    <div className="flex-1 pt-5">
                        <SubTabs />
                        <ModeForm />
                    </div>
                    <HelpPanel />
                </div>
            </div>
            <footer className="mt-[9px] flex gap-3 pl-[140px] text-[11px] leading-[14px] text-[#555]">
                <span>Copyright Swisscom AG 2009</span>
                <span>Alle Rechte vorbehalten</span>
            </footer>
        </main>
    );
}

export default function App() {
    return (
        <div className="flex min-h-screen flex-col [font-family:'Noto_Sans','Open_Sans',sans-serif]">
            <TopPanel />
            <div className="flex flex-1">
                <Launcher />
                <div className="flex min-w-0 flex-1 flex-col">
                    <TabStrip />
                    <NavBar />
                    <BookmarksBar />
                    <RouterPage />
                </div>
            </div>
        </div>
    );
}
